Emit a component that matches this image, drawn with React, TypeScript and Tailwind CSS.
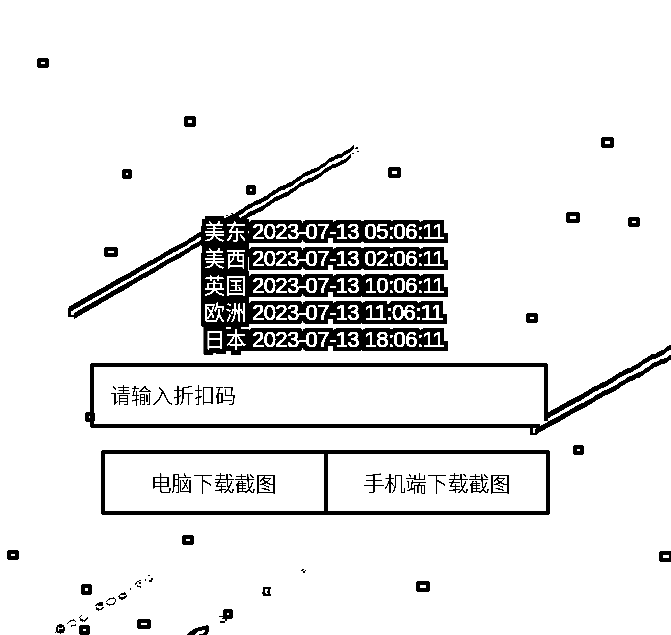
import React from "react";

const clocks = [
  { zone: "美东", time: "2023-07-13 05:06:11" },
  { zone: "美西", time: "2023-07-13 02:06:11" },
  { zone: "英国", time: "2023-07-13 10:06:11" },
  { zone: "欧洲", time: "2023-07-13 11:06:11" },
  { zone: "日本", time: "2023-07-13 18:06:11" },
];

// Snowflakes: left, top, width, height
const flakes = [
  [37, 58, 12, 10], [184, 116, 12, 11], [122, 169, 10, 10], [246, 185, 10, 10],
  [104, 247, 14, 10], [388, 167, 13, 11], [601, 137, 13, 11], [566, 212, 14, 11],
  [628, 217, 12, 10], [526, 313, 12, 10], [85, 412, 10, 10], [573, 445, 11, 10],
  [182, 535, 12, 10], [7, 550, 12, 10], [81, 584, 11, 11], [137, 619, 14, 10],
  [79, 625, 11, 10], [223, 609, 10, 10], [659, 551, 14, 11], [416, 581, 14, 11],
];

// A meteor edge: solid at the head, fraying towards the tail
function edge(x1: number, y1: number, x2: number, y2: number, w1: number, w2: number, phase: number) {
  const steps = Math.round((x2 - x1) / 3);
  const top: string[] = [];
  const bottom: string[] = [];
  for (let i = 0; i <= steps; i++) {
    const t = i / steps;
    const x = x1 + (x2 - x1) * t;
    const wobble = (Math.sin(i * 0.7 + phase) * 0.9 + Math.sin(i * 2.3 + phase) * 0.6) * t;
    const y = y1 + (y2 - y1) * t + wobble;
    const half = (w1 + (w2 - w1) * t) / 2;
    top.push(`${x.toFixed(1)},${(y - half).toFixed(1)}`);
    bottom.unshift(`${x.toFixed(1)},${(y + half).toFixed(1)}`);
  }
  return [...top, ...bottom].join(" ");
}

function Outline({ id, radius, intercept }: { id: string; radius: string; intercept: number }) {
  return (
    <filter id={id} x="-25%" y="-25%" width="150%" height="150%" colorInterpolationFilters="sRGB">
      <feComponentTransfer in="SourceGraphic" result="crisp">
        <feFuncA type="linear" slope="20" intercept={intercept} />
      </feComponentTransfer>
      <feMorphology in="crisp" operator="dilate" radius={radius} result="fat" />
      <feColorMatrix in="fat" type="matrix" values="0 0 0 0 0  0 0 0 0 0  0 0 0 0 0  0 0 0 1 0" result="black" />
      <feMerge>
        <feMergeNode in="black" />
        <feMergeNode in="crisp" />
      </feMerge>
    </filter>
  );
}

function Filters() {
  return (
    <svg width="0" height="0" className="absolute">
      <Outline id="outlined-time" radius="4 4" intercept={-7} />
      <Outline id="outlined-zone" radius="4 5" intercept={-7} />
      <filter id="crisp" x="0" y="0" width="100%" height="100%" colorInterpolationFilters="sRGB">
        <feComponentTransfer>
          <feFuncA type="linear" slope="20" intercept="-6" />
        </feComponentTransfer>
      </filter>
    </svg>
  );
}

function Sky() {
  return (
    <svg className="pointer-events-none absolute inset-0" width="671" height="635" viewBox="0 0 671 635" shapeRendering="crispEdges">
      <polygon points={edge(69, 309.5, 354, 147.5, 6, 4, 0)} />
      <polygon points={edge(74, 316, 351, 156.5, 6, 4, 2)} />
      <path d="M68 308h3v9h-3zM68 315h9v2h-9z" />
      <path d="M226 215h2v1h-2zM231 213h2v1h-2zM233 216h3v1h-3zM238 214h1v2h-1zM355 148h3v1h-3zM357 151h2v1h-2zM356 147h2v1h-2zM352 153h2v1h-2z" />
    </svg>
  );
}

function Foreground() {
  return (
    <svg className="pointer-events-none absolute inset-0" width="671" height="635" viewBox="0 0 671 635" shapeRendering="crispEdges">
      <polygon fill="white" points="540,429 540,424 544,421 550,421 550,424 541,430 534,432 533,428" />
      <polygon points={edge(546, 416.5, 673, 346, 6, 5, 0)} />
      <polygon points={edge(535, 432, 673, 355.5, 6, 5, 2)} />
      <path d="M530 427h3v8h-3zM544 414h4v7h-4zM530 433h7v2h-7z" />
      {flakes.map(([x, y, w, h]) => (
        <path key={`${x}-${y}`} fillRule="evenodd" d={`M${x + 1} ${y}h${w - 2}v1h1v${h - 2}h-1v1h${2 - w}v-1h-1v${2 - h}h1zM${x + 4} ${y + 4}v${h - 8}h${w - 8}v${8 - h}z`} />
      ))}
      {/* Broken trail at the bottom left */}
      <g fill="none" stroke="black" strokeWidth="1.3">
        <circle cx="60.5" cy="629" r="3.6" strokeWidth="2.2" />
        <path d="M59 627h3M59 630h5M55 633l2-2M67 624l3-3 4-1 2 2M71 626l5-1M79 618l3-3M80 620l5 1 3-4" />
        <path d="M95 606l4-3h4M96 608l4 2 4-3M98 605h5M106 602l3-3 5-1 2 2-2 4-5 1-3-2M118 597l3-3h5M118 596l4 2 4-1M124 592l2 2" />
        <path d="M130 589h1M135 585l2-3 4-2M137 586l4 1M139 583h2M145 580h1M148 576l2-1M152 578v2M149 581h3" />
        <path d="M119 597l3 2 5-3M96 608l3 2M80 619l3 2" strokeWidth="2" />
      </g>
      <path fillRule="evenodd" d="M187 635v-1l4-3 5-3 8-2 3-1 2 2v4l-2 4h-11l6-1 3-3-1-1-5 1-5 4z" />
      <path fillRule="evenodd" d="M263 587h8v2h-1v5h1v2h-8v-2h-1v-2h1zM265 589v4l1 1h2v-1h-1v-2h1v-2z" />
      <path d="M219 616h5v1h-5zM222 618h4v1h-4zM220 621h5v2h-5zM225 618h2v3h-2zM302 569h2v1h-2zM303 571h2v2h-2zM301 570h2v1h-2zM305 570h1v1h-1z" />
    </svg>
  );
}

export default function App() {
  return (
    <main className="relative h-[635px] w-[671px] overflow-hidden bg-white font-['Liberation_Sans','Noto_Sans_CJK_SC',sans-serif] text-[21px] text-black">
      <Filters />
      <Sky />
      <section className="relative pt-[218px] pl-[204px]">
        {clocks.map((c) => (
          <p key={c.zone} className="flex h-[27px] whitespace-pre leading-[27px] text-white">
            <span className="w-12 tracking-[0.5px] [filter:url(#outlined-zone)]">{c.zone}</span>
            <span className="text-[22px] tracking-[-0.55px] [-webkit-text-stroke:0.5px_white] [filter:url(#outlined-time)]">{c.time}</span>
          </p>
        ))}
      </section>
      <form className="relative pt-[10px]">
        <input
          placeholder="请输入折扣码"
          className="ml-[90px] block h-[65px] w-[458px] rounded-[3px] border-4 border-black bg-transparent px-4 pb-1 font-['Noto_Sans_CJK_SC',sans-serif] font-light text-black [filter:url(#crisp)] placeholder:text-black placeholder:opacity-100"
        />
        <div className="mt-[22px] ml-[101px] flex h-[65px] w-[449px] font-['Noto_Sans_CJK_SC',sans-serif] font-light">
          <button type="button" className="w-[227px] rounded-[3px] border-4 border-black pr-0.5 [filter:url(#crisp)]">电脑下载截图</button>
          <button type="button" className="-ml-1 w-[226px] rounded-[3px] border-4 border-black [filter:url(#crisp)]">手机端下载截图</button>
        </div>
      </form>
      <Foreground />
    </main>
  );
}
